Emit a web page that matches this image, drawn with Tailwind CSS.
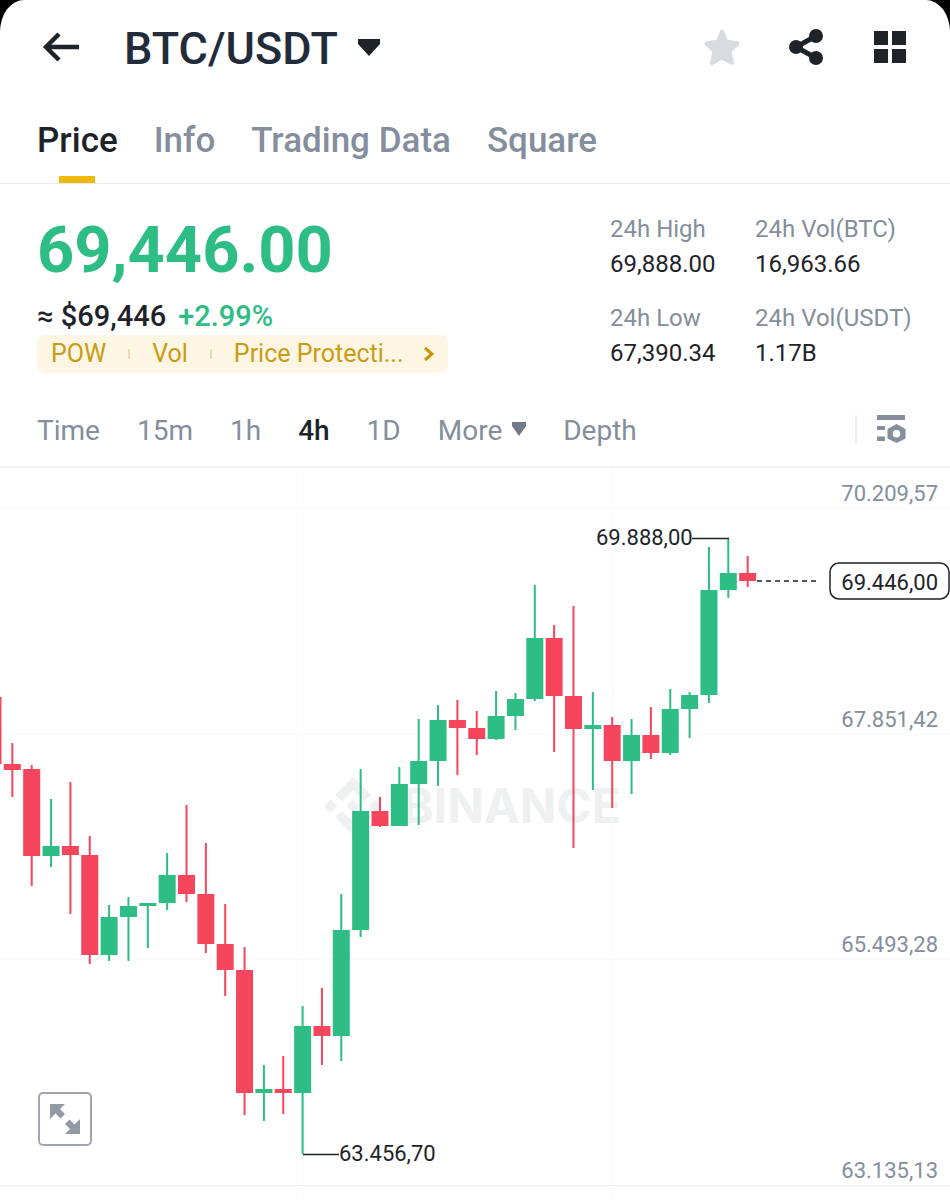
<!DOCTYPE html>
<html lang="en">
<head>
    <meta charset="UTF-8">
    <meta name="viewport" content="width=device-width, initial-scale=1.0">
    <title>BTC/USDT</title>
    <script src="https://cdn.jsdelivr.net/npm/@tailwindcss/browser@4"></script>
</head>
<body class="bg-black font-[Roboto,'Liberation_Sans',sans-serif] text-[#1e2329]">
<div class="min-h-screen overflow-hidden bg-white [border-radius:24px_24px_0_0/32px_32px_0_0]">

    <header class="flex h-[94px] items-center pr-[42px] pl-10">
        <button aria-label="Back" class="mr-11">
            <svg class="h-10 w-10" viewBox="0 0 40 40" fill="none" stroke="#1e2329" stroke-width="4.500">
                <path d="M39 20H7M19 7L6 20L19 33" />
            </svg>
        </button>
        <button class="flex items-center gap-5">
            <span class="pt-1 text-[45px] leading-[52px] font-medium text-[#222b3a]">BTC/USDT</span>
            <svg class="h-[17px] w-[22px]" viewBox="0 0 22 17" fill="#1e2329"><path d="M0 0H22V5L11 17L0 5Z" /></svg>
        </button>
        <div class="ml-auto flex items-center gap-12">
            <button aria-label="Favorite">
                <svg class="h-9 w-9" viewBox="0 0 36 36" fill="#d8dce1" stroke="#d8dce1" stroke-width="4" stroke-linejoin="round">
                    <path d="M18 2.500L22.200 12.500L33.500 14.500L25.500 22L28 34L18 28.500L8 34L10.500 22L2.500 14.500L13.800 12.500Z" />
                </svg>
            </button>
            <button aria-label="Share">
                <svg class="h-9 w-9" viewBox="0 0 36 36" fill="#1e2329">
                    <path d="M28 7L8 18L28 29" fill="none" stroke="#1e2329" stroke-width="5" />
                    <circle cx="8" cy="18" r="7" /><circle cx="28" cy="7" r="7" /><circle cx="28" cy="29" r="7" />
                </svg>
            </button>
            <button aria-label="Menu">
                <svg class="h-9 w-9" viewBox="0 0 36 36" fill="#1e2329">
                    <path d="M2 2H16V16H2ZM20 2H34V16H20ZM2 20H16V34H2ZM20 20H34V34H20Z" />
                </svg>
            </button>
        </div>
    </header>

    <nav class="flex h-[90px] gap-9 border-b border-[#eaeaea] px-[37px] pt-[25px] text-[35px] leading-[44px] font-medium text-[#848e9c]">
        <a href="#" class="flex flex-col items-center justify-between text-[#1e2329]">Price<span class="h-[7px] w-9 bg-[#f0b90b]"></span></a>
        <a href="#">Info</a>
        <a href="#">Trading Data</a>
        <a href="#">Square</a>
    </nav>

    <section class="flex justify-between pt-7 pl-[37px]">
        <div>
            <div class="h-[84px] text-[65px] leading-[76px] font-bold text-[#2ebd85]">69,446.00</div>
            <div class="flex h-[39px] items-center gap-3 text-[29px] leading-[40px] font-medium">
                <span>≈ $69,446</span>
                <span class="text-[#2ebd85]">+2.99%</span>
            </div>
            <button class="flex h-[38px] w-[411px] items-center rounded-lg bg-[#fef6e4] px-[14px] text-[25px] text-[#c99c14]">
                <span>POW</span>
                <span class="mx-[22px] h-[10px] w-[2px] bg-[#ecdcae]"></span>
                <span>Vol</span>
                <span class="mx-[22px] h-[10px] w-[2px] bg-[#ecdcae]"></span>
                <span>Price Protecti...</span>
                <svg class="ml-auto h-[14px] w-[10px]" viewBox="0 0 10 14" fill="none" stroke="#c99400" stroke-width="3"><path d="M1 1L8 7L1 13" /></svg>
            </button>
        </div>
        <dl class="grid w-[340px] grid-cols-[145px_1fr] grid-rows-[89px_70px] text-[24px] leading-[35px]">
            <div><dt class="text-[#848e9c]">24h High</dt><dd>69,888.00</dd></div>
            <div><dt class="text-[#848e9c]">24h Vol(BTC)</dt><dd>16,963.66</dd></div>
            <div><dt class="text-[#848e9c]">24h Low</dt><dd>67,390.34</dd></div>
            <div><dt class="text-[#848e9c]">24h Vol(USDT)</dt><dd>1.17B</dd></div>
        </dl>
    </section>

    <div class="mt-[23px] flex h-[72px] items-center gap-[37px] border-b-2 border-[#f3f3f4] pr-11 pl-[37px] text-[28px] text-[#848e9c]">
        <button>Time</button>
        <button>15m</button>
        <button>1h</button>
        <button class="font-medium text-[#1e2329]">4h</button>
        <button>1D</button>
        <button class="flex items-center gap-[10px]">More
            <svg class="mb-1 h-[14px] w-[14px]" viewBox="0 0 14 14" fill="#707a8a"><path d="M0 0H14V4L7 14L0 4Z" /></svg>
        </button>
        <button>Depth</button>
        <button aria-label="Chart settings" class="mb-1 ml-auto flex h-7 items-center border-l-2 border-[#eaecef] pl-5">
            <svg class="h-7 w-[29px]" viewBox="0 0 29 28" fill="#848e9c" fill-rule="evenodd">
                <path d="M0 0H28V5H0ZM0 11H8V15H0ZM0 21.500H8V26H0ZM19.500 9L28.500 14V23.500L19.500 28L10.500 23.500V14ZM19.500 15A3.800 3.800 0 1 0 19.500 22.600A3.800 3.800 0 1 0 19.500 15Z" />
            </svg>
        </button>
    </div>

    <main class="relative">
        <svg class="block w-full" viewBox="0 468 950 732" font-size="22">
            <g fill="#eff0f1">
                <path transform="translate(324 777) scale(.46)" d="M38.730 53.200l24.590-24.580 24.600 24.600 14.300-14.310L63.320 0l-38.900 38.900zM0 63.310l14.300-14.310 14.310 14.310-14.310 14.300zM38.730 73.410l24.590 24.590 24.600-24.600 14.310 14.290-38.900 38.910-38.910-38.880zM98 63.310l14.300-14.310 14.310 14.300-14.310 14.320zM77.830 63.300L63.320 48.780 48.810 63.280l14.510 14.500z" />
                <text x="402" y="823" font-family="Inter, sans-serif" font-weight="700" font-size="48">BINANCE</text>
            </g>
            <path d="M0 508.500H950M0 734.500H950M0 959.500H950M302.500 468V1200M612.500 468V1200" stroke="#f9f9fa" />
            <path d="M0 1185.500H950" stroke="#eaeaec" />
            <g id="candles"></g>
            <path d="M692 538.500H729M303 1154.500H339" stroke="#1e2329" stroke-width="1.500" />
            <path d="M757 581H820" stroke="#1e2329" stroke-width="1.500" stroke-dasharray="5 4" />
            <g fill="#1e2329">
                <text x="596" y="545">69.888,00</text>
                <text x="339" y="1161">63.456,70</text>
            </g>
            <rect x="830" y="563" width="119" height="36" rx="9" fill="#fff" stroke="#1e2329" stroke-width="1.500" />
            <text x="938" y="590" text-anchor="end" fill="#1e2329">69.446,00</text>
            <g fill="#848e9c" text-anchor="end">
                <text x="938" y="501">70.209,57</text>
                <text x="938" y="727">67.851,42</text>
                <text x="938" y="952">65.493,28</text>
                <text x="938" y="1178">63.135,13</text>
            </g>
        </svg>
        <button aria-label="Full screen" class="absolute bottom-[54px] left-[38px] flex h-[54px] w-[54px] items-center justify-center rounded-[5px] border-2 border-[#a0a5b0] bg-white">
            <svg class="h-[30px] w-[30px]" viewBox="0 0 30 30" fill="#929aa5">
                <path d="M0 0H15L10 5L15 10L10.500 14.500L5.500 9.500L0 15ZM30 30H15L20 25L15 20L19.500 15.500L24.500 20.500L30 15Z" />
            </svg>
        </button>
    </main>
</div>

<script>
    // [high, open/close top, open/close bottom, low, up]
    const candles = [
        [697, 697, 764, 764, 0],
        [743, 764, 770, 797, 0],
        [765, 769, 856, 886, 0],
        [799, 846, 856, 867, 1],
        [782, 846, 855, 914, 0],
        [836, 855, 955, 964, 0],
        [905, 917, 955, 961, 1],
        [897, 906, 917, 961, 1],
        [903, 903, 906, 948, 1],
        [853, 875, 903, 910, 1],
        [805, 875, 894, 902, 0],
        [843, 894, 944, 953, 0],
        [904, 944, 970, 996, 0],
        [947, 970, 1093, 1115, 0],
        [1065, 1089, 1093, 1121, 1],
        [1056, 1089, 1093, 1114, 0],
        [1006, 1026, 1093, 1154, 1],
        [988, 1026, 1036, 1065, 0],
        [894, 930, 1036, 1061, 1],
        [769, 811, 930, 937, 1],
        [797, 811, 826, 827, 0],
        [767, 784, 826, 826, 1],
        [719, 761, 784, 825, 1],
        [705, 720, 761, 786, 1],
        [700, 720, 728, 775, 0],
        [711, 728, 739, 755, 0],
        [691, 716, 739, 740, 1],
        [693, 699, 716, 730, 1],
        [585, 638, 699, 701, 1],
        [625, 638, 696, 752, 0],
        [606, 696, 729, 848, 0],
        [692, 725, 729, 790, 1],
        [717, 725, 761, 808, 0],
        [719, 735, 761, 794, 1],
        [707, 735, 753, 759, 0],
        [689, 709, 753, 755, 1],
        [692, 695, 709, 738, 1],
        [547, 590, 695, 703, 1],
        [539, 573, 590, 598, 1],
        [556, 573, 581, 587, 0]
    ];
    const step = 19.35;
    document.getElementById('candles').innerHTML = candles.map(([high, top, bottom, low, up], i) => {
        const x = -7 + i * step;
        return `<g fill="${up ? '#2ebd85' : '#f6465d'}">
            <rect x="${x - 1}" y="${high}" width="2" height="${low - high}" />
            <rect x="${x - 8.5}" y="${top}" width="17" height="${bottom - top}" />
        </g>`;
    }).join('');
</script>
</body>
</html>
